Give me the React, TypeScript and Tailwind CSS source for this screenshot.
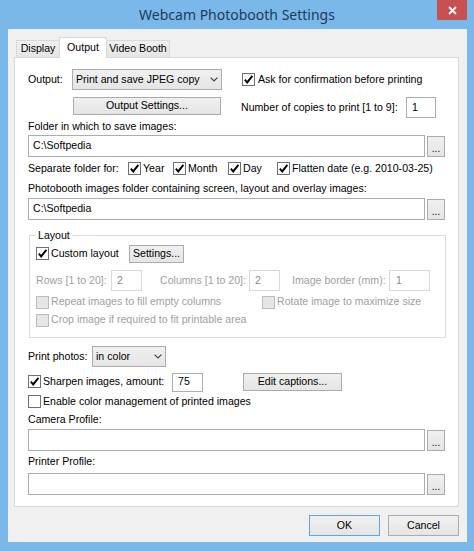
import React from "react";

function Check({ checked = false, disabled = false }: { checked?: boolean; disabled?: boolean }) {
  return (
    <span
      className={`flex h-[13px] w-[13px] shrink-0 items-center justify-center border ${
        disabled ? "border-[#bcbcbc] bg-[#e6e6e6]" : "border-[#707070] bg-white"
      }`}
    >
      {checked && (
        <svg width="11" height="11" viewBox="0 0 11 11">
          <path d="M1.8 5.6 L4.2 8.4 L9.4 1.8" fill="none" stroke="#000" strokeWidth="1.9" />
        </svg>
      )}
    </span>
  );
}

function Btn({ children, className = "" }: { children?: React.ReactNode; className?: string }) {
  return (
    <div
      className={`flex shrink-0 items-center justify-center border bg-linear-to-b from-[#f0f0f0] to-[#e5e5e5] text-black ${className}`}
    >
      {children}
    </div>
  );
}

function Field({ value = "", className = "", disabled = false }: { value?: string; className?: string; disabled?: boolean }) {
  return (
    <div
      className={`flex shrink-0 items-center border bg-white px-[4px] ${
        disabled ? "border-[#d9d9d9] text-[#8a8a8a]" : "border-[#abadb3] text-black"
      } ${className}`}
    >
      {value}
    </div>
  );
}

function Combo({ value, className = "" }: { value: string; className?: string }) {
  return (
    <div
      className={`flex shrink-0 items-center justify-between border border-[#acacac] bg-linear-to-b from-[#f0f0f0] to-[#e5e5e5] pl-[3px] pr-[3px] ${className}`}
    >
      <span>{value}</span>
      <svg width="8" height="5" viewBox="0 0 8 5">
        <path d="M0.6 0.6 L4 4 L7.4 0.6" fill="none" stroke="#404040" strokeWidth="1.2" />
      </svg>
    </div>
  );
}

function Dots() {
  return (
    <Btn className="h-[21px] w-[18px] border-[#acacac]">
      <span className="pt-[4px] text-[10px] leading-none">...</span>
    </Btn>
  );
}

function PathRow({ value = "" }: { value?: string }) {
  return (
    <div className="flex h-[22px] items-end gap-[2px]">
      <Field value={value} className="h-[22px] flex-1" />
      <Dots />
    </div>
  );
}

export default function App() {
  return (
    <div className="flex h-[551px] w-[474px] flex-col overflow-hidden whitespace-nowrap bg-[#7ab8e9] font-['Liberation_Sans',Arial,sans-serif] text-[10.6px] text-black">
      {/* Title bar */}
      <div className="grid h-[29px] shrink-0 grid-cols-[1fr_auto_1fr] items-start">
        <div />
        <div className="flex h-[29px] items-center font-['Noto_Sans',sans-serif] text-[14px] text-[#233a58]">
          Webcam Photobooth Settings
        </div>
        <div className="flex justify-end pr-[7px]">
          <div className="flex h-[20px] w-[30px] items-center justify-center bg-[#c75050]">
            <svg width="9" height="9" viewBox="0 0 9 9">
              <path d="M1 1 L8 8 M8 1 L1 8" stroke="#fff" strokeWidth="1.8" />
            </svg>
          </div>
        </div>
      </div>

      {/* Client area */}
      <div className="ml-[8px] mr-[7px] flex h-[513px] shrink-0 flex-col bg-[#f0f0f0]">
        {/* Tabs */}
        <div className="ml-[8px] mt-[8px] flex h-[20px] items-end">
          <div className="flex h-[17px] w-[43px] items-center justify-center border-l border-t border-[#d9d9d9] bg-linear-to-b from-[#f0f0f0] to-[#e5e5e5]">
            Display
          </div>
          <div className="relative z-10 -mb-px flex h-[21px] w-[48px] items-center justify-center border-l border-r border-t border-[#d9d9d9] bg-white">
            Output
          </div>
          <div className="flex h-[17px] w-[63px] items-center justify-center border-r border-t border-[#d9d9d9] bg-linear-to-b from-[#f0f0f0] to-[#e5e5e5]">
            Video Booth
          </div>
        </div>

        {/* Panel */}
        <div className="ml-[6px] mr-[8px] flex h-[450px] flex-col border border-[#d9d9d9] bg-white px-[13px] pt-[11px]">
          {/* Output row */}
          <div className="flex h-[21px] items-center">
            <div className="flex w-[214px] items-center">
              <span className="w-[44px]">Output:</span>
              <Combo value="Print and save JPEG copy" className="h-[21px] w-[150px]" />
            </div>
            <Check checked />
            <span className="ml-[3px]">Ask for confirmation before printing</span>
          </div>
          <div className="mt-[7px] flex h-[21px]">
            <div className="flex w-[213px]">
              <Btn className="ml-[45px] h-[18px] w-[148px] border-[#acacac]">Output Settings...</Btn>
            </div>
            <div className="flex flex-1 items-center">
              <span>Number of copies to print [1 to 9]:</span>
              <Field value="1" className="ml-auto mr-[9px] h-[21px] w-[30px] px-[5px]" />
            </div>
          </div>

          <div className="flex h-[17px] items-center">Folder in which to save images:</div>
          <PathRow value="C:\Softpedia" />

          <div className="flex h-[23px] items-center">
            <span className="w-[100px]">Separate folder for:</span>
            <div className="flex w-[45px] items-center">
              <Check checked />
              <span className="ml-[2px]">Year</span>
            </div>
            <div className="flex w-[55px] items-center">
              <Check checked />
              <span className="ml-[2px]">Month</span>
            </div>
            <div className="flex w-[49px] items-center">
              <Check checked />
              <span className="ml-[2px]">Day</span>
            </div>
            <div className="flex items-center">
              <Check checked />
              <span className="ml-[2px]">Flatten date (e.g. 2010-03-25)</span>
            </div>
          </div>

          <div className="flex h-[18px] items-center">
            Photobooth images folder containing screen, layout and overlay images:
          </div>
          <PathRow value="C:\Softpedia" />

          {/* Layout group */}
          <fieldset className="ml-px mt-[8px] w-[417px] border border-[#dcdcdc] pb-[10px] pl-[6px]">
            <legend className="px-[2px] leading-[14px]">Layout</legend>
            <div className="mt-[3px] flex h-[18px] items-center">
              <div className="flex w-[93px] items-center">
                <Check checked />
                <span className="ml-[2px]">Custom layout</span>
              </div>
              <Btn className="h-[18px] w-[55px] border-[#acacac]">Settings...</Btn>
            </div>
            <div className="mt-[7px] flex h-[21px] items-center text-[#a0a0a0]">
              <span className="w-[75px]">Rows [1 to 20]:</span>
              <Field disabled value="2" className="h-[21px] w-[31px] px-[5px]" />
              <span className="ml-[18px] w-[89px]">Columns [1 to 20]:</span>
              <Field disabled value="2" className="h-[21px] w-[31px] px-[5px]" />
              <span className="ml-[12px] w-[97px]">Image border (mm):</span>
              <Field disabled value="1" className="h-[21px] w-[41px] px-[6px]" />
            </div>
            <div className="mt-[4px] flex h-[14px] items-center text-[#a0a0a0]">
              <div className="flex w-[226px] items-center">
                <Check disabled />
                <span className="ml-[2px]">Repeat images to fill empty columns</span>
              </div>
              <Check disabled />
              <span className="ml-[2px]">Rotate image to maximize size</span>
            </div>
            <div className="mt-[4px] flex h-[14px] items-center text-[#a0a0a0]">
              <Check disabled />
              <span className="ml-[2px]">Crop image if required to fit printable area</span>
            </div>
          </fieldset>

          <div className="mt-[8px] flex h-[21px] items-center">
            <span className="w-[64px]">Print photos:</span>
            <Combo value="in color" className="h-[21px] w-[74px]" />
          </div>

          <div className="mt-[5px] flex h-[20px] items-center">
            <div className="flex w-[144px] items-center">
              <Check checked />
              <span className="ml-[2px]">Sharpen images, amount:</span>
            </div>
            <Field value="75" className="h-[19px] w-[31px] px-[5px]" />
            <Btn className="ml-[40px] h-[18px] w-[99px] border-[#acacac]">Edit captions...</Btn>
          </div>

          <div className="flex h-[19px] items-center">
            <Check />
            <span className="ml-[2px]">Enable color management of printed images</span>
          </div>

          <div className="flex h-[18px] items-center">Camera Profile:</div>
          <PathRow />
          <div className="flex h-[22px] items-center">Printer Profile:</div>
          <PathRow />
        </div>

        {/* Dialog buttons */}
        <div className="mt-[8px] flex justify-end gap-[8px] pr-[8px]">
          <Btn className="h-[21px] w-[71px] border-[#5ea6e8]">OK</Btn>
          <Btn className="h-[21px] w-[71px] border-[#acacac]">Cancel</Btn>
        </div>
      </div>
    </div>
  );
}
